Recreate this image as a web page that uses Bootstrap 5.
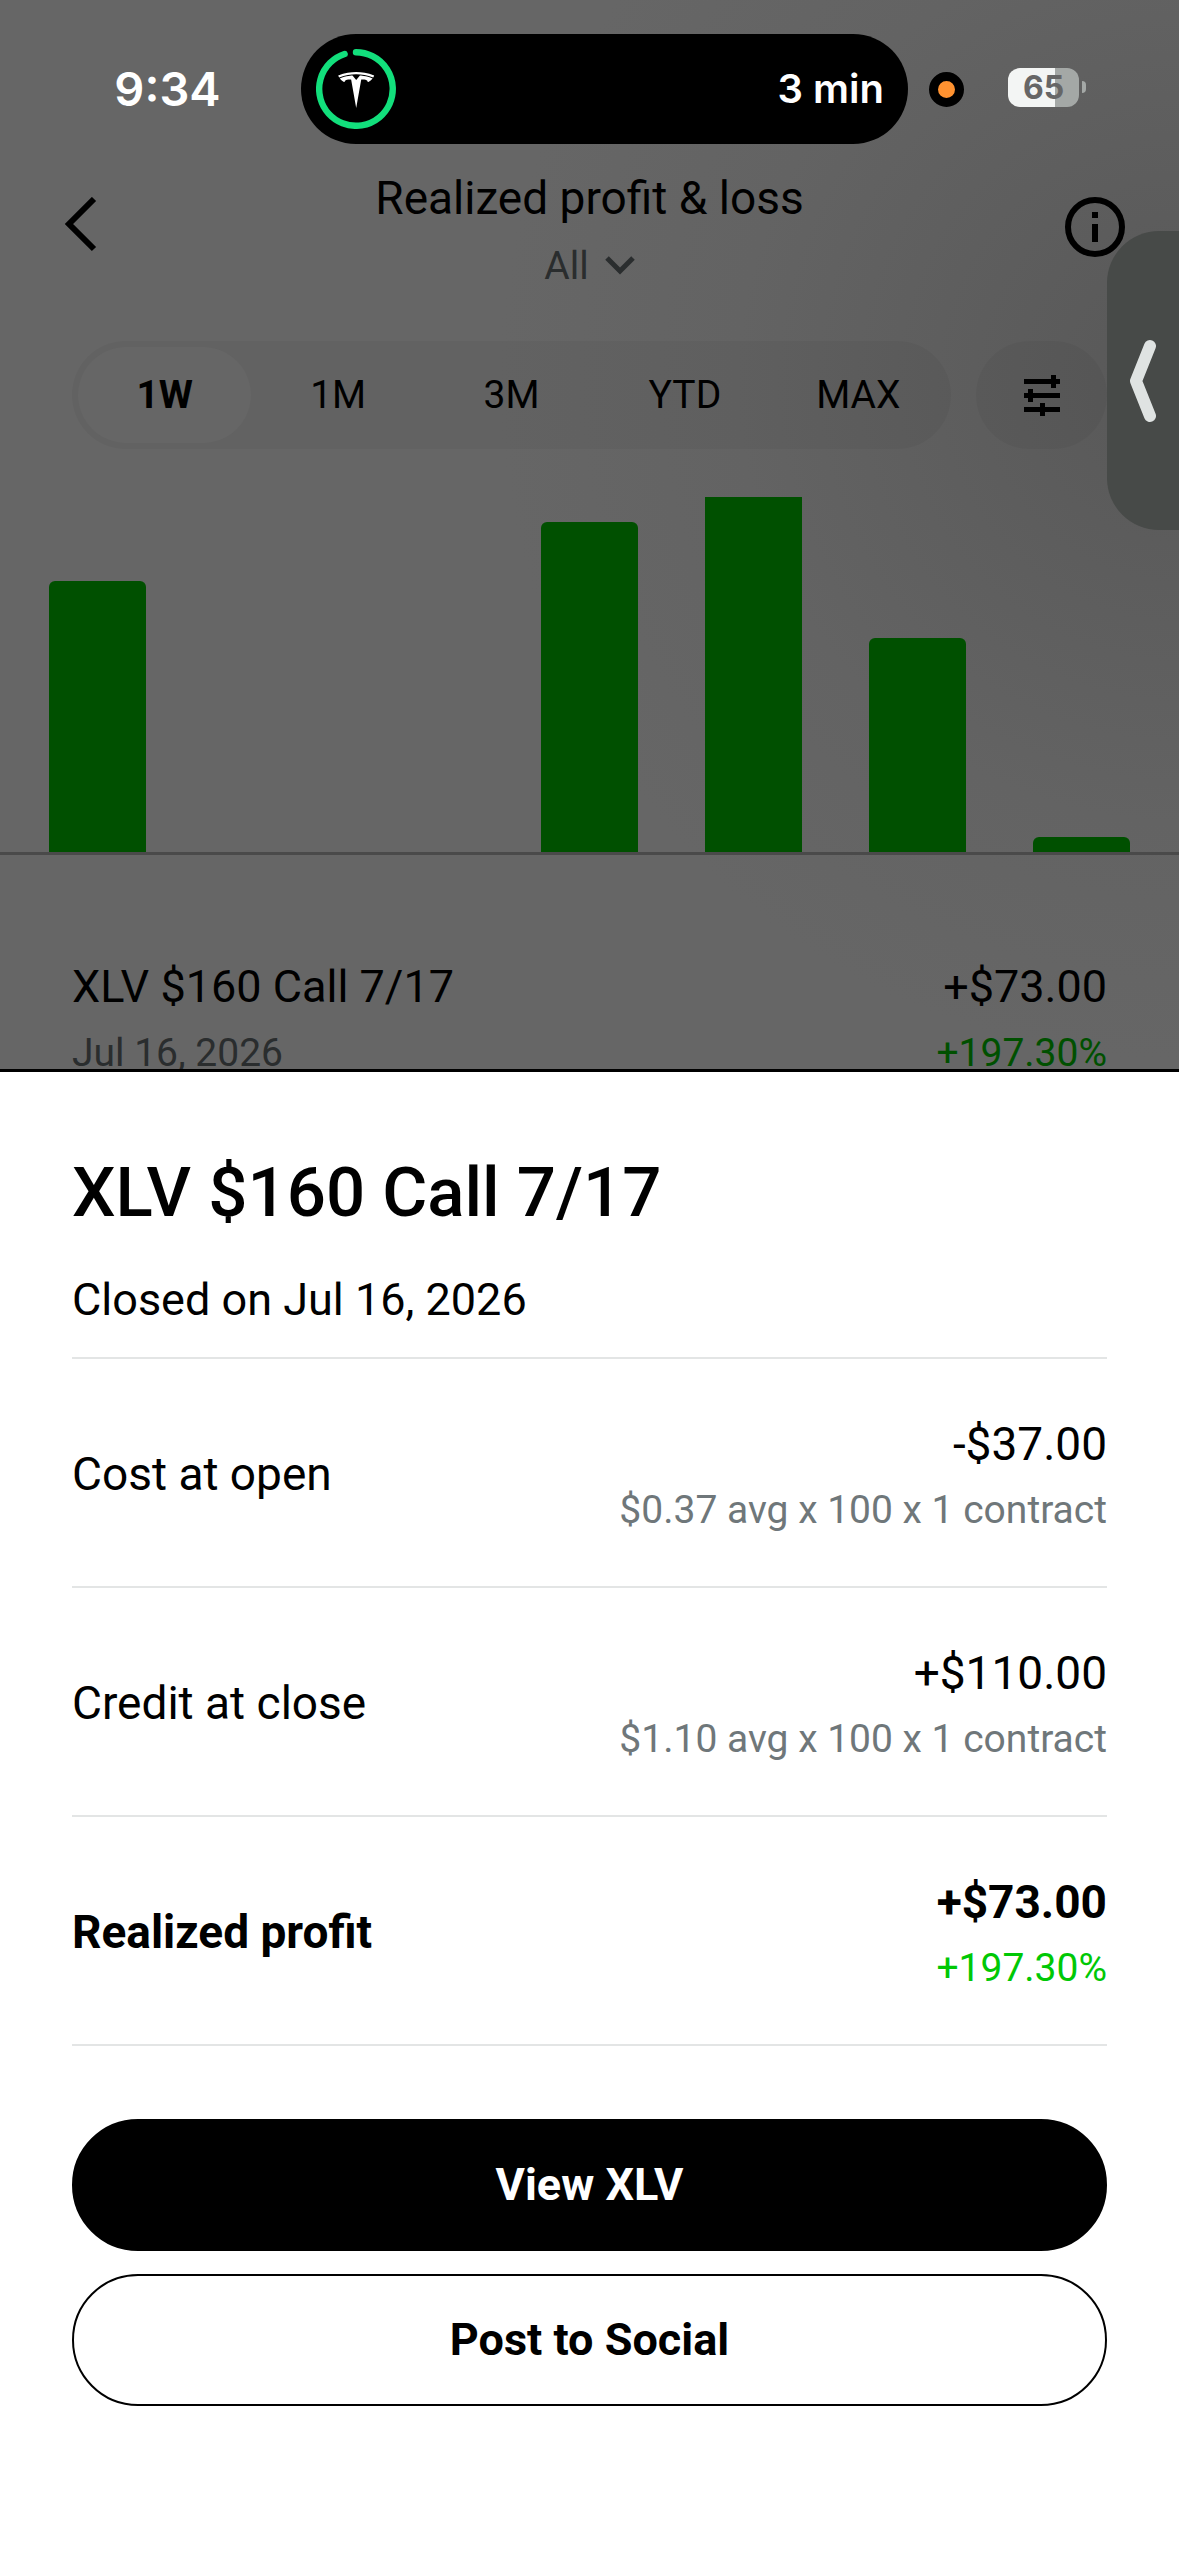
<!DOCTYPE html>
<html lang="en">
<head>
<meta charset="utf-8">
<meta name="viewport" content="width=device-width, initial-scale=1">
<title>Realized profit &amp; loss</title>
<link href="https://cdn.jsdelivr.net/npm/bootstrap@5.3.0/dist/css/bootstrap.min.css" rel="stylesheet">
<style>
  :root { --gutter: 72px; --dim: #666666; --green-dim: #005000; --green: #00c805; --muted: #6f777a; }
  body { font-family: Roboto, "Liberation Sans", sans-serif; color: #000; background: #fff; font-size: 45px; line-height: 60px; }
  button { font: inherit; color: inherit; background: none; border: 0; padding: 0; }
  svg { display: block; flex: none; }
  .gutter { padding-left: var(--gutter); padding-right: var(--gutter); }
  .small-line { font-size: 39px; line-height: 48px; }

  .backdrop-page { background: radial-gradient(circle 680px at 100% 380px, #585858 0, #5d5d5d 30%, #636363 65%, var(--dim) 100%) var(--dim); padding-top: 34px; }

  .status-bar { display: grid; grid-template-columns: 301fr 607fr 271fr; height: 110px; font-family: Inter, "Liberation Sans", sans-serif; font-weight: 600; color: #fff; }
  .clock { font-size: 47px; padding-left: 34px; }
  .island { background: #000; border-radius: 55px; padding: 0 24px 0 15px; font-size: 40px; }
  .status-right { padding-left: 21px; gap: 44px; }
  .mic-dot { width: 35px; height: 35px; border: 9px solid #000; border-radius: 50%; background: #ff9230; }
  .battery-body { width: 71px; height: 39px; border-radius: 12px; background: linear-gradient(90deg, #f3f5f4 66%, #a4a8a6 66%); color: #666; font-size: 32px; font-weight: 700; line-height: 39px; }
  .battery-cap { width: 4px; height: 12px; border-radius: 0 4px 4px 0; background: #a4a8a6; margin-left: 3px; }

  .top-bar { padding: 24px 53px 0; height: 146px; }
  .page-title, .detail { font-size: 46px; }
  .account-btn { margin-top: 14px; gap: 16px; }
  .side-slot { width: 72px; height: 114px; padding: 0 10px; }
  .muted-dim { color: #2a2d2e; }
  .range-row { margin-top: 51px; gap: 25px; }
  .range-pill { padding: 6px; height: 108px; background: rgba(0,0,0,.04); }
  .range-pill button { flex: 1 1 0; border-radius: 48px; }
  .range-pill .selected { background: var(--dim); font-weight: 700; }
  .filter-btn { width: 131px; height: 108px; background: rgba(0,0,0,.04); }

  .pl-chart { margin-top: 48px; height: 358px; padding: 0 49px; border-bottom: 3px solid #4a4a4a; }
  .pl-chart span { width: 97px; background: var(--green-dim); border-radius: 6px 6px 0 0; }
  .pl-chart .clipped { border-radius: 0; }
  .history-row { padding-top: 102px; }
  .green-dim { color: var(--green-dim); }

  .edge-tab { position: absolute; right: 0; top: 231px; width: 72px; height: 299px; border-radius: 52px 0 0 52px; background: #474a48; }

  .sheet { position: relative; margin-top: -8px; border-top: 3px solid #000; background: #fff; padding-top: 79px; padding-bottom: 150px; }
  .sheet h1 { font-size: 69px; line-height: 84px; font-weight: 500; margin: 0 0 35px; }
  .closed-on { margin: 0; padding-bottom: 27px; border-bottom: 2px solid #e3e5e5; }
  .detail { padding: 55px 0 52px; border-bottom: 2px solid #e3e5e5; }
  .stack { gap: 12px; }
  .muted-text { color: var(--muted); }
  .gain { color: var(--green); }
  .actions { padding-top: 73px; gap: 23px; }
  .actions .btn { height: 132px; font-size: 45px; font-weight: 700; border: 2px solid #000; border-radius: 66px; padding: 0; }
  .btn-solid, .btn-solid:hover { background: #000; color: #fff; }
  .btn-line, .btn-line:hover { background: #fff; color: #000; }
</style>
</head>
<body>
<div class="position-relative">
  <div class="backdrop-page">
    <div class="status-bar">
      <div class="clock d-flex align-items-center justify-content-center">9:34</div>
      <div class="island d-flex align-items-center justify-content-between">
        <svg width="80" height="80" viewBox="0 0 80 80" aria-hidden="true">
          <path d="M40 3.2A36.8 36.8 0 1 1 28.6 5" fill="none" stroke="#12df7c" stroke-width="6.4" stroke-linecap="round"/>
          <path transform="translate(22.2 23) scale(1.5)" fill="#fff" d="M12 5.362l2.475-3.026s4.245.09 8.471 2.054c-1.082 1.636-3.231 2.438-3.231 2.438-.146-1.439-1.154-1.79-4.354-1.79L12 24 8.619 5.034c-3.18 0-4.188.354-4.335 1.792 0 0-2.146-.795-3.229-2.43C5.28 2.431 9.525 2.34 9.525 2.34L12 5.362zM12 1.463c3.415-.03 7.326.528 11.328 2.28.535-.968.672-1.395.672-1.395C19.625.612 15.528.015 12 0 8.472.015 4.375.61 0 2.349c0 0 .195.525.672 1.396C4.674 1.989 8.585 1.435 12 1.46z"/>
        </svg>
        <span>3 min</span>
      </div>
      <div class="status-right d-flex align-items-center">
        <span class="mic-dot"></span>
        <div class="d-flex align-items-center mb-1">
          <div class="battery-body text-center">65</div>
          <div class="battery-cap"></div>
        </div>
      </div>
    </div>

    <header class="top-bar d-flex justify-content-between">
      <button class="side-slot d-flex align-items-center" type="button" aria-label="Back">
        <svg width="34" height="56" viewBox="0 0 34 56"><path d="M31 2L6 27l25 25" fill="none" stroke="#000" stroke-width="6"/></svg>
      </button>
      <div class="d-flex flex-column align-items-center">
        <div class="page-title">Realized profit &amp; loss</div>
        <button class="account-btn small-line muted-dim d-flex align-items-center" type="button">All
          <svg width="30" height="20" viewBox="0 0 30 20"><path d="M2 2l13 13L28 2" fill="none" stroke="#2a2d2e" stroke-width="5"/></svg>
        </button>
      </div>
      <button class="side-slot d-flex align-items-center justify-content-end px-0" type="button" aria-label="About">
        <svg width="62" height="66" viewBox="0 0 62 66"><circle cx="31" cy="35" r="27" fill="none" stroke="#000" stroke-width="6"/><path d="M28 20h6v6h-6zM28 32h6v18h-6z"/></svg>
      </button>
    </header>

    <div class="range-row gutter d-flex small-line">
      <div class="range-pill rounded-pill d-flex flex-grow-1" role="group" aria-label="Range">
        <button type="button" class="selected">1W</button>
        <button type="button">1M</button>
        <button type="button">3M</button>
        <button type="button">YTD</button>
        <button type="button">MAX</button>
      </div>
      <button type="button" class="filter-btn rounded-pill d-flex align-items-center justify-content-center" aria-label="Filters">
        <svg width="36" height="42" viewBox="0 0 36 42"><path d="M0 5h36v5H0zM27 1h5v13h-5zM0 19h36v5H0zM4 15h5v13H4zM0 33h36v5H0zM16 29h5v13h-5z"/></svg>
      </button>
    </div>

    <div class="pl-chart d-flex align-items-end justify-content-between">
      <span style="height:271px"></span>
      <span style="height:0"></span>
      <span style="height:0"></span>
      <span style="height:330px"></span>
      <span class="clipped" style="height:355px"></span>
      <span style="height:214px"></span>
      <span style="height:15px"></span>
    </div>

    <div class="history-row gutter d-flex justify-content-between">
      <div class="stack d-flex flex-column">
        <div>XLV $160 Call 7/17</div>
        <div class="small-line muted-dim">Jul 16, 2026</div>
      </div>
      <div class="stack d-flex flex-column text-end">
        <div>+$73.00</div>
        <div class="small-line green-dim">+197.30%</div>
      </div>
    </div>
  </div>

  <button type="button" class="edge-tab d-flex align-items-center justify-content-center" aria-label="Open side panel">
    <svg width="30" height="84" viewBox="0 0 30 84"><path d="M22 7L8 42l14 35" fill="none" stroke="#dfe3e2" stroke-width="12" stroke-linecap="round" stroke-linejoin="round"/></svg>
  </button>

  <main class="sheet gutter">
    <h1>XLV $160 Call 7/17</h1>
    <p class="closed-on">Closed on Jul 16, 2026</p>

    <div class="detail d-flex align-items-center justify-content-between">
      <div>Cost at open</div>
      <div class="stack d-flex flex-column text-end">
        <div>-$37.00</div>
        <div class="small-line muted-text">$0.37 avg x 100 x 1 contract</div>
      </div>
    </div>
    <div class="detail d-flex align-items-center justify-content-between">
      <div>Credit at close</div>
      <div class="stack d-flex flex-column text-end">
        <div>+$110.00</div>
        <div class="small-line muted-text">$1.10 avg x 100 x 1 contract</div>
      </div>
    </div>
    <div class="detail d-flex align-items-center justify-content-between">
      <div class="fw-bold">Realized profit</div>
      <div class="stack d-flex flex-column text-end">
        <div class="fw-bold">+$73.00</div>
        <div class="small-line gain">+197.30%</div>
      </div>
    </div>

    <div class="actions d-flex flex-column">
      <button type="button" class="btn btn-solid">View XLV</button>
      <button type="button" class="btn btn-line">Post to Social</button>
    </div>
  </main>
</div>
<script src="https://cdn.jsdelivr.net/npm/bootstrap@5.3.0/dist/js/bootstrap.bundle.min.js"></script>
</body>
</html>
